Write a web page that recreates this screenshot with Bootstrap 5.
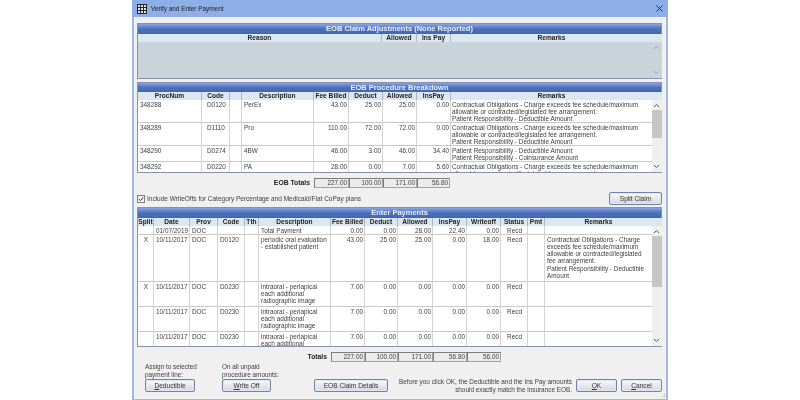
<!DOCTYPE html>
<html lang="en">
<head>
<meta charset="utf-8">
<title>Verify and Enter Payment</title>
<link href="https://cdn.jsdelivr.net/npm/bootstrap@5.3.0/dist/css/bootstrap.min.css" rel="stylesheet">
<style>
html,body{height:100%;background:#fff;overflow:hidden}
body{font-family:"Liberation Sans",Arial,sans-serif;font-size:6.4px;line-height:7px;color:#404040}
.dlg{width:536px;height:400px;margin-left:132px;background:#f0f0f0;border:solid #9db8e6;border-width:0 2px 1px 2px;position:relative;filter:blur(.35px)}
.ttl{height:17px;margin:0 -2px;background:#8eaee8;padding:0 5px;color:#222;font-size:6.4px}
.ttl svg{flex:none}
.inner{padding:6px 4px 0 3px}
.pnl{width:525px;border:1px solid #8492ab;background:#fff}
.gap3{margin-top:3px}
.band{height:10px;background:linear-gradient(#8aa5e0,#4c70bc 50%,#4166b4);color:#e8eefb;font-weight:700;font-size:7.5px;line-height:10px;text-align:center}
.band9{height:9px;line-height:9px}
.grid{table-layout:fixed;width:514px;border-collapse:separate;border-spacing:0;margin:0}
.grid th{height:8px;padding:0;background:#dbe8f4;border-right:1px solid #a9b6c4;font-weight:700;font-size:6.6px;line-height:8px;text-align:center;color:#222;white-space:nowrap;overflow:hidden}
.grid th:last-child,.grid td:last-child{border-right:0}
.grid td{padding:1px 1px 0 2px;border-right:1px solid #d4d4d4;border-bottom:1px solid #c9c9c9;vertical-align:top;overflow:hidden;background:#fff}
.grid .num{text-align:right}
.grid .mid{text-align:center}
.proc td:nth-child(2){padding-left:5px}
.proc td:last-child{padding-left:1px}
.tight td{line-height:7.3px;padding-top:.5px}
.r23{height:23px}.r16{height:16px}.r9{height:9px}.r47{height:47px}.r25{height:25px}
.clipa{height:80px;overflow:hidden;flex:none}
.clipb{height:128px;overflow:hidden;flex:none}
.gray{height:36px;background:#c9d3da}
.sbar{width:10px;background:linear-gradient(#dbe8f4 8px,#efefef 8px);color:#777;flex:none;position:relative}
.sbar svg{position:absolute;left:1px}
.sup{top:11px}.sdn{bottom:3px}
.thumb{position:absolute;left:0;right:0;background:#c6c6c6;top:18px}
.thA{height:28px}.thB{height:51px}
.sbarg{background:linear-gradient(#dbe8f4 8px,#c9d3da 8px)}
.tots{height:10px;margin-top:5px}
.tlab{font-weight:700;font-size:6.8px;line-height:10px;text-align:right;padding-right:4px;color:#222}
.tw1{width:177px}.tw2{width:194px}
.tc{height:10px;background:#ebebeb;border:1px solid #a2a2a2;border-left-color:#7d7d7d;border-top-color:#7d7d7d;text-align:right;line-height:8px;padding-right:1px}
.w33{width:33px}.w34{width:34px}.w35{width:35px}
.chkrow{height:13px;margin-top:4px;margin-bottom:2px}
.chkrow svg{flex:none;margin-right:2px}
.chk-txt{font-size:6.5px}
.winbtn.btn{padding:0;border:1px solid #6f83a8;border-radius:2px;background:linear-gradient(#fbfbfb,#e8e8ea 50%,#d4d8e0);box-shadow:inset 0 0 0 1px #dfe8f6;font-size:6.6px;line-height:11px;height:13px;color:#333;--bs-btn-font-size:6.6px}
.bw53{width:53px}.bw50{width:50px}.bw49{width:49px}.bw74{width:74px}.bw41{width:41px}
.bot{margin-top:1px;height:29px}
.capt{height:16px;line-height:8px;white-space:nowrap}
.g1{width:50px;margin-left:8px}.g2{width:49px;margin-left:27px}.g3{margin-left:43px}
.note{width:184px;text-align:right;line-height:8px;margin-bottom:-2px;white-space:nowrap}
.g4{margin-left:4px}
.grip{position:absolute;right:1px;bottom:1px}
</style>
</head>
<body>
<div class="dlg">
  <div class="ttl d-flex align-items-center">
    <svg width="10" height="10" viewBox="0 0 10 10"><rect x=".5" y=".5" width="9" height="9" fill="#dfe6f2" stroke="#222"/><path d="M3.5 0v10M6.5 0v10M0 3.5h10M0 6.5h10" stroke="#222"/></svg>
    <span class="ms-1">Verify and Enter Payment</span>
    <svg class="ms-auto" width="7" height="7" viewBox="0 0 7 7"><path d="M.5.5l6 6M6.5.5l-6 6" stroke="#333" stroke-width="1"/></svg>
  </div>
  <div class="inner">
    <div class="pnl">
      <div class="band">EOB Claim Adjustments (None Reported)</div>
      <div class="d-flex">
        <div class="flex-grow-1">
          <table class="grid">
            <colgroup><col width="244"><col width="35"><col width="34"><col width="201"></colgroup>
            <tr><th>Reason</th><th>Allowed</th><th>Ins Pay</th><th>Remarks</th></tr>
          </table>
          <div class="gray"></div>
        </div>
        <div class="sbar sbarg">
          <svg class="sup" width="7" height="5" viewBox="0 0 7 5"><path d="M1 4l2.5-2.5L6 4" fill="none" stroke="#9aa" /></svg>
          <svg class="sdn" width="7" height="5" viewBox="0 0 7 5"><path d="M1 1l2.5 2.5L6 1" fill="none" stroke="#9aa"/></svg>
        </div>
      </div>
    </div>

    <div class="pnl gap3">
      <div class="band band9">EOB Procedure Breakdown</div>
      <div class="d-flex">
        <div class="clipa">
          <table class="grid proc">
            <colgroup><col width="64"><col width="28"><col width="12"><col width="72"><col width="35"><col width="34"><col width="34"><col width="34"><col width="201"></colgroup>
            <tr><th>ProcNum</th><th>Code</th><th></th><th>Description</th><th>Fee Billed</th><th>Deduct</th><th>Allowed</th><th>InsPay</th><th>Remarks</th></tr>
            <tr class="r23"><td>348288</td><td>D0120</td><td></td><td>PerEx</td><td class="num">43.00</td><td class="num">25.00</td><td class="num">25.00</td><td class="num">0.00</td><td>Contractual Obligations - Charge exceeds fee schedule/maximum allowable or contracted/legislated fee arrangement.<br>Patient Responsibility - Deductible Amount</td></tr>
            <tr class="r23"><td>348289</td><td>D1110</td><td></td><td>Pro</td><td class="num">110.00</td><td class="num">72.00</td><td class="num">72.00</td><td class="num">0.00</td><td>Contractual Obligations - Charge exceeds fee schedule/maximum allowable or contracted/legislated fee arrangement.<br>Patient Responsibility - Deductible Amount</td></tr>
            <tr class="r16"><td>348290</td><td>D0274</td><td></td><td>4BW</td><td class="num">46.00</td><td class="num">3.00</td><td class="num">46.00</td><td class="num">34.40</td><td>Patient Responsibility - Deductible Amount<br>Patient Responsibility - Coinsurance Amount</td></tr>
            <tr class="r23"><td>348292</td><td>D0220</td><td></td><td>PA</td><td class="num">28.00</td><td class="num">0.00</td><td class="num">7.00</td><td class="num">5.60</td><td>Contractual Obligations - Charge exceeds fee schedule/maximum allowable or contracted/legislated fee arrangement.<br>Patient Responsibility - Deductible Amount</td></tr>
          </table>
        </div>
        <div class="sbar">
          <svg class="sup" width="7" height="5" viewBox="0 0 7 5"><path d="M1 4l2.5-2.5L6 4" fill="none" stroke="#555"/></svg>
          <div class="thumb thA"></div>
          <svg class="sdn" width="7" height="5" viewBox="0 0 7 5"><path d="M1 1l2.5 2.5L6 1" fill="none" stroke="#555"/></svg>
        </div>
      </div>
    </div>

    <div class="tots d-flex">
      <div class="tlab tw1">EOB Totals</div>
      <div class="tc w35">227.00</div><div class="tc w34">100.00</div><div class="tc w34">171.00</div><div class="tc w33">56.80</div>
    </div>

    <div class="chkrow d-flex align-items-center">
      <svg width="8" height="8" viewBox="0 0 8 8"><rect x=".5" y=".5" width="7" height="7" fill="#f2f4f7" stroke="#7c7c7c"/><path d="M1.8 4l1.6 1.7 2.9-3.4" fill="none" stroke="#333"/></svg>
      <span class="chk-txt">Include WriteOffs for Category Percentage and Medicaid/Flat CoPay plans</span>
      <button type="button" class="btn winbtn bw53 ms-auto">Split Claim</button>
    </div>

    <div class="pnl">
      <div class="band">Enter Payments</div>
      <div class="d-flex">
        <div class="clipb">
          <table class="grid tight">
            <colgroup><col width="16"><col width="36"><col width="28"><col width="27"><col width="14"><col width="72"><col width="34"><col width="33"><col width="35"><col width="34"><col width="34"><col width="27"><col width="17"><col width="107"></colgroup>
            <tr><th>Split</th><th>Date</th><th>Prov</th><th>Code</th><th>Tth</th><th>Description</th><th>Fee Billed</th><th>Deduct</th><th>Allowed</th><th>InsPay</th><th>Writeoff</th><th>Status</th><th>Pmt</th><th>Remarks</th></tr>
            <tr class="r9"><td></td><td>01/07/2019</td><td>DOC</td><td></td><td></td><td>Total Payment</td><td class="num">0.00</td><td class="num">0.00</td><td class="num">28.00</td><td class="num">22.40</td><td class="num">0.00</td><td class="mid">Recd</td><td></td><td></td></tr>
            <tr class="r47"><td class="mid">X</td><td>10/11/2017</td><td>DOC</td><td>D0120</td><td></td><td>periodic oral evaluation - established patient</td><td class="num">43.00</td><td class="num">25.00</td><td class="num">25.00</td><td class="num">0.00</td><td class="num">18.00</td><td class="mid">Recd</td><td></td><td>Contractual Obligations - Charge exceeds fee schedule/maximum allowable or contracted/legislated fee arrangement.<br>Patient Responsibility - Deductible Amount</td></tr>
            <tr class="r25"><td class="mid">X</td><td>10/11/2017</td><td>DOC</td><td>D0230</td><td></td><td>intraoral - periapical each additional radiographic image</td><td class="num">7.00</td><td class="num">0.00</td><td class="num">0.00</td><td class="num">0.00</td><td class="num">0.00</td><td class="mid">Recd</td><td></td><td></td></tr>
            <tr class="r25"><td></td><td>10/11/2017</td><td>DOC</td><td>D0230</td><td></td><td>intraoral - periapical each additional radiographic image</td><td class="num">7.00</td><td class="num">0.00</td><td class="num">0.00</td><td class="num">0.00</td><td class="num">0.00</td><td class="mid">Recd</td><td></td><td></td></tr>
            <tr class="r25"><td></td><td>10/11/2017</td><td>DOC</td><td>D0230</td><td></td><td>intraoral - periapical each additional radiographic image</td><td class="num">7.00</td><td class="num">0.00</td><td class="num">0.00</td><td class="num">0.00</td><td class="num">0.00</td><td class="mid">Recd</td><td></td><td></td></tr>
          </table>
        </div>
        <div class="sbar">
          <svg class="sup" width="7" height="5" viewBox="0 0 7 5"><path d="M1 4l2.5-2.5L6 4" fill="none" stroke="#555"/></svg>
          <div class="thumb thB"></div>
          <svg class="sdn" width="7" height="5" viewBox="0 0 7 5"><path d="M1 1l2.5 2.5L6 1" fill="none" stroke="#555"/></svg>
        </div>
      </div>
    </div>

    <div class="tots d-flex">
      <div class="tlab tw2">Totals</div>
      <div class="tc w34">227.00</div><div class="tc w33">100.00</div><div class="tc w35">171.00</div><div class="tc w34">56.80</div><div class="tc w34">56.00</div>
    </div>

    <div class="bot d-flex align-items-end">
      <div class="g1">
        <div class="capt">Assign to selected<br>payment line:</div>
        <button type="button" class="btn winbtn bw50"><u>D</u>eductible</button>
      </div>
      <div class="g2">
        <div class="capt">On all unpaid<br>procedure amounts:</div>
        <button type="button" class="btn winbtn bw49"><u>W</u>rite Off</button>
      </div>
      <button type="button" class="btn winbtn bw74 g3">EOB Claim Details</button>
      <div class="note">Before you click OK, the Deductible and the Ins Pay amounts<br>should exactly match the insurance EOB.</div>
      <button type="button" class="btn winbtn bw41 g4"><u>O</u>K</button>
      <button type="button" class="btn winbtn bw41 g4"><u>C</u>ancel</button>
    </div>
  </div>
  <svg class="grip" width="5" height="5" viewBox="0 0 5 5"><path d="M4 1h1v1H4zM2 3h1v1H2zM4 3h1v1H4z" fill="#aaa"/></svg>
</div>
<script src="https://cdn.jsdelivr.net/npm/bootstrap@5.3.0/dist/js/bootstrap.bundle.min.js"></script>
</body>
</html>
